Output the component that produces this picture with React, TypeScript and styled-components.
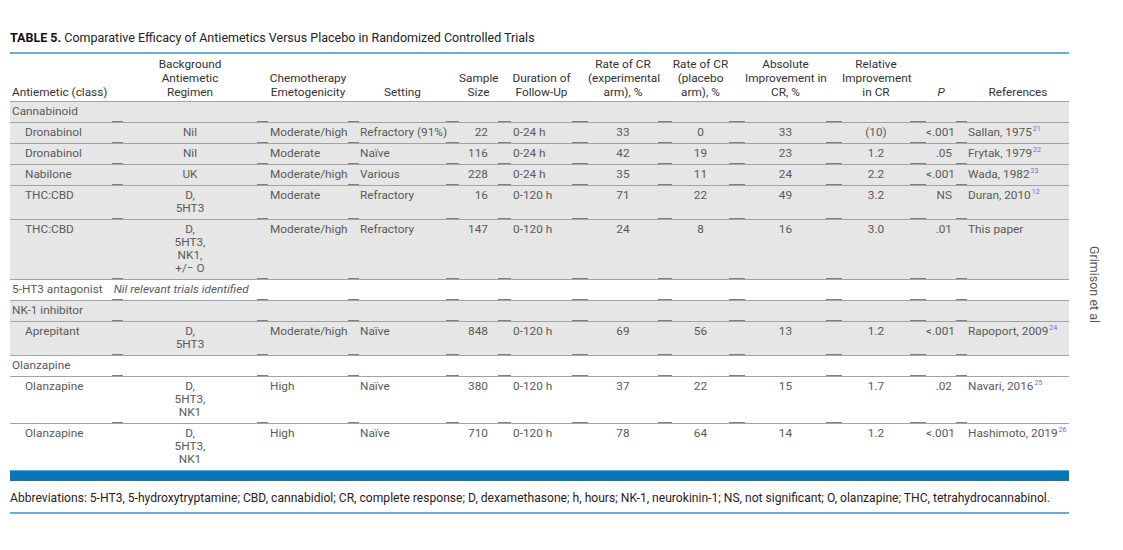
import styled, { createGlobalStyle } from 'styled-components'

const GlobalStyle = createGlobalStyle`
  body {
    margin: 0;
    background: #ffffff;
    font-family: Roboto, "Liberation Sans", Arial, sans-serif;
  }
`

type Align = 'left' | 'center' | 'right'

interface Col {
  w: number
  gap: number
  align: Align
  pl?: number
  pr?: number
}

const cols: Col[] = [
  { w: 113, gap: 11, align: 'left', pl: 2 },
  { w: 145, gap: 11, align: 'center' },
  { w: 91, gap: 11, align: 'left', pl: 2 },
  { w: 100, gap: 13, align: 'left', pl: 1 },
  { w: 52, gap: 13, align: 'right', pr: 10 },
  { w: 77, gap: 16, align: 'left', pl: 2 },
  { w: 84, gap: 14, align: 'center' },
  { w: 73, gap: 16, align: 'center' },
  { w: 97, gap: 16, align: 'center' },
  { w: 84, gap: 16, align: 'center' },
  { w: 41, gap: 11, align: 'right', pr: 4 },
  { w: 102, gap: 0, align: 'left', pl: 1 },
]

const template = cols.map((c) => `${c.w}px`).join(' ')

const Page = styled.div`
  display: flex;
  padding: 31px 0 0 10px;
`

const Main = styled.div`
  width: 1059px;
`

const Side = styled.div`
  margin-left: 18px;
  display: flex;
  align-items: center;
  padding-top: 24px;
`

const RunningHead = styled.span`
  writing-mode: vertical-rl;
  font-size: 12.5px;
  color: #555;
`

const Title = styled.div`
  font-size: 12.5px;
  line-height: 14px;
  color: #222;
  padding-bottom: 7px;
  border-bottom: 2px solid #6aaed6;

  b {
    font-weight: 700;
    color: #111;
  }
`

const HeadRow = styled.div`
  display: grid;
  grid-template-columns: ${template};
  padding-top: 3px;
  padding-bottom: 2px;
  border-bottom: 1px solid #a3a3a3;
`

const HeadCell = styled.div<{ $align: Align; $gap: number; $pl: number }>`
  display: flex;
  flex-direction: column;
  justify-content: flex-end;
  text-align: ${(p) => p.$align};
  padding-left: ${(p) => p.$pl}px;
  padding-right: ${(p) => p.$gap}px;
  font-size: 11.8px;
  line-height: 14px;
  color: #333;
  white-space: nowrap;

  i {
    font-style: italic;
  }
`

const Row = styled.div<{ $shade: boolean; $last?: boolean }>`
  display: grid;
  grid-template-columns: ${template};
  background: ${(p) => (p.$shade ? '#e6e6e6' : '#ffffff')};
  border-bottom: ${(p) => (p.$last ? 'none' : '1px solid #a3a3a3')};
`

const Cell = styled.div<{ $align: Align; $gap: number; $pl: number; $pr: number; $dash: boolean }>`
  position: relative;
  padding: 3px ${(p) => p.$gap + p.$pr}px 4px ${(p) => p.$pl}px;
  text-align: ${(p) => p.$align};
  font-size: 11.8px;
  line-height: 13px;
  color: #5a5a5a;
  white-space: nowrap;

  /* darker tick where the cell borders meet */
  &::after {
    content: '';
    display: ${(p) => (p.$dash && p.$gap > 0 ? 'block' : 'none')};
    position: absolute;
    right: 0;
    bottom: 0;
    width: ${(p) => p.$gap}px;
    height: 1px;
    background: #808080;
  }
`

const SectionLabel = styled.span`
  color: #5a5a5a;
`

const Note = styled.span`
  font-style: italic;
  margin-left: 11px;
  color: #5a5a5a;
`

const Ref = styled.sup`
  font-size: 7px;
  color: #6b6bf0;
  vertical-align: 5px;
  line-height: 0;
  margin-left: 1px;
`

const BlueBar = styled.div`
  height: 10px;
  background: #0a77b4;
  border-top: 1px solid #5aa6d4;
`

const Footnote = styled.div`
  margin-top: 10px;
  padding-bottom: 7px;
  border-bottom: 2px solid #6aaed6;
  font-size: 12.1px;
  line-height: 14px;
  color: #1e1e1e;
  white-space: nowrap;
`

const headers: string[][] = [
  ['Antiemetic (class)'],
  ['Background', 'Antiemetic', 'Regimen'],
  ['Chemotherapy', 'Emetogenicity'],
  ['Setting'],
  ['Sample', 'Size'],
  ['Duration of', 'Follow-Up'],
  ['Rate of CR', '(experimental', 'arm), %'],
  ['Rate of CR', '(placebo', 'arm), %'],
  ['Absolute', 'Improvement in', 'CR, %'],
  ['Relative', 'Improvement', 'in CR'],
  ['P'],
  ['References'],
]

type DataRow = {
  kind: 'data'
  shade: boolean
  cells: (string | string[])[]
  ref: [string, string]
}
type SectionRow = { kind: 'section'; shade: boolean; label: string; note?: string }
type TableRow = DataRow | SectionRow

const rows: TableRow[] = [
  { kind: 'section', shade: true, label: 'Cannabinoid' },
  { kind: 'data', shade: true, cells: ['Dronabinol', 'Nil', 'Moderate/high', 'Refractory (91%)', '22', '0-24 h', '33', '0', '33', '(10)', '<.001'], ref: ['Sallan, 1975', '21'] },
  { kind: 'data', shade: true, cells: ['Dronabinol', 'Nil', 'Moderate', 'Naïve', '116', '0-24 h', '42', '19', '23', '1.2', '.05'], ref: ['Frytak, 1979', '22'] },
  { kind: 'data', shade: true, cells: ['Nabilone', 'UK', 'Moderate/high', 'Various', '228', '0-24 h', '35', '11', '24', '2.2', '<.001'], ref: ['Wada, 1982', '23'] },
  { kind: 'data', shade: true, cells: ['THC:CBD', ['D,', '5HT3'], 'Moderate', 'Refractory', '16', '0-120 h', '71', '22', '49', '3.2', 'NS'], ref: ['Duran, 2010', '12'] },
  { kind: 'data', shade: true, cells: ['THC:CBD', ['D,', '5HT3,', 'NK1,', '+/− O'], 'Moderate/high', 'Refractory', '147', '0-120 h', '24', '8', '16', '3.0', '.01'], ref: ['This paper', ''] },
  { kind: 'section', shade: false, label: '5-HT3 antagonist', note: 'Nil relevant trials identified' },
  { kind: 'section', shade: true, label: 'NK-1 inhibitor' },
  { kind: 'data', shade: true, cells: ['Aprepitant', ['D,', '5HT3'], 'Moderate/high', 'Naïve', '848', '0-120 h', '69', '56', '13', '1.2', '<.001'], ref: ['Rapoport, 2009', '24'] },
  { kind: 'section', shade: false, label: 'Olanzapine' },
  { kind: 'data', shade: false, cells: ['Olanzapine', ['D,', '5HT3,', 'NK1'], 'High', 'Naïve', '380', '0-120 h', '37', '22', '15', '1.7', '.02'], ref: ['Navari, 2016', '25'] },
  { kind: 'data', shade: false, cells: ['Olanzapine', ['D,', '5HT3,', 'NK1'], 'High', 'Naïve', '710', '0-120 h', '78', '64', '14', '1.2', '<.001'], ref: ['Hashimoto, 2019', '26'] },
]

const renderValue = (v: string | string[]) =>
  Array.isArray(v) ? v.map((line, i) => <div key={i}>{line}</div>) : v

const App = () => {
  return (
    <>
      <GlobalStyle />
      <Page>
        <Main>
          <Title>
            <b>TABLE 5.</b> Comparative Efficacy of Antiemetics Versus Placebo in Randomized Controlled Trials
          </Title>

          <HeadRow>
            {headers.map((lines, i) => (
              <HeadCell
                key={i}
                $align={i === 0 ? 'left' : 'center'}
                $gap={cols[i].gap}
                $pl={i === 0 ? 2 : 0}
              >
                {lines.map((l, j) => (
                  <div key={j}>{i === 10 ? <i>{l}</i> : l}</div>
                ))}
              </HeadCell>
            ))}
          </HeadRow>

          {rows.map((row, r) => {
            const last = r === rows.length - 1
            if (row.kind === 'section') {
              return (
                <Row key={r} $shade={row.shade}>
                  {cols.map((c, i) => (
                    <Cell key={i} $align="left" $gap={c.gap} $pl={i === 0 ? 2 : 0} $pr={0} $dash>
                      {i === 0 && (
                        <>
                          <SectionLabel>{row.label}</SectionLabel>
                          {row.note && <Note>{row.note}</Note>}
                        </>
                      )}
                    </Cell>
                  ))}
                </Row>
              )
            }
            return (
              <Row key={r} $shade={row.shade} $last={last}>
                {row.cells.map((v, i) => (
                  <Cell
                    key={i}
                    $align={cols[i].align}
                    $gap={cols[i].gap}
                    $pl={i === 0 ? 15 : cols[i].pl ?? 0}
                    $pr={cols[i].pr ?? 0}
                    $dash={!last}
                  >
                    {renderValue(v)}
                  </Cell>
                ))}
                <Cell $align="left" $gap={0} $pl={1} $pr={0} $dash={false}>
                  {row.ref[0]}
                  {row.ref[1] && <Ref>{row.ref[1]}</Ref>}
                </Cell>
              </Row>
            )
          })}

          <BlueBar />
          <Footnote>
            Abbreviations: 5-HT3, 5-hydroxytryptamine; CBD, cannabidiol; CR, complete response; D, dexamethasone; h, hours; NK-1, neurokinin-1; NS, not significant; O, olanzapine; THC, tetrahydrocannabinol.
          </Footnote>
        </Main>
        <Side>
          <RunningHead>Grimison et al</RunningHead>
        </Side>
      </Page>
    </>
  )
}

export default App
